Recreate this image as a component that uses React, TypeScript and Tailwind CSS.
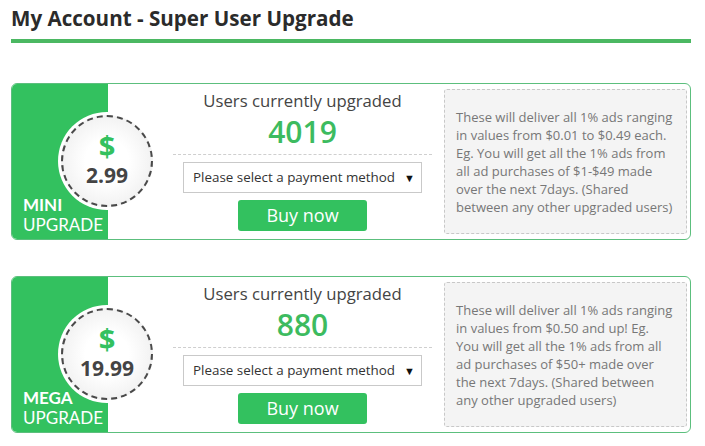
import { ReactNode } from "react";

type Plan = {
  name: string;
  price: string;
  users: string;
  text: ReactNode;
};

const plans: Plan[] = [
  {
    name: "MINI",
    price: "2.99",
    users: "4019",
    text: "These will deliver all 1% ads ranging in values from $0.01 to $0.49 each. Eg. You will get all the 1% ads from all ad purchases of $1-$49 made over the next 7days. (Shared between any other upgraded users)",
  },
  {
    name: "MEGA",
    price: "19.99",
    users: "880",
    text: "These will deliver all 1% ads ranging in values from $0.50 and up! Eg. You will get all the 1% ads from all ad purchases of $50+ made over the next 7days. (Shared between any other upgraded users)",
  },
];

function PriceBadge({ price }: { price: string }) {
  return (
    <div className="absolute left-[46px] top-[28px] flex h-[98px] w-[98px] items-center justify-center rounded-full bg-white">
      <div className="flex h-[92px] w-[92px] flex-col items-center justify-center rounded-full border-2 border-dashed border-[#4a4a4a] bg-[radial-gradient(circle,#ffffff_35%,#e9e9e9_100%)] pb-[2px]">
        <span className="text-[29px] font-bold leading-[30px] text-[#33c15f]">$</span>
        <span className="text-[21px] font-bold leading-[28px] text-[#444]">{price}</span>
      </div>
    </div>
  );
}

function PlanCard({ plan }: { plan: Plan }) {
  return (
    <div className="relative flex h-[157px] w-[680px] rounded-[6px] border border-[#5cbf7d]">
      {/* green side panel */}
      <div className="flex w-[96px] flex-col justify-end rounded-l-[5px] bg-[#33c15f] pb-[4px] pl-[11px] font-['Lato',sans-serif] text-[17px] leading-[20px] text-white">
        <span className="font-bold">{plan.name}</span>
        <span>UPGRADE</span>
      </div>

      <PriceBadge price={plan.price} />

      {/* middle column */}
      <div className="ml-[65px] flex w-[259px] flex-col items-center pt-[5px]">
        <div className="text-[16.7px] leading-[23px] text-[#444]">Users currently upgraded</div>
        <div className="mt-[2px] text-[30px] font-semibold leading-[36px] text-[#3dbb5f]">{plan.users}</div>
        <div className="mt-[4px] w-full border-t border-dashed border-[#cfcfcf]" />
        <div className="mt-[7px] flex h-[31px] w-[239px] items-center justify-between border border-[#c9c9c9] bg-white pl-[9px] pr-[6px] text-[13.4px] text-[#333]">
          <span>Please select a payment method</span>
          <span className="text-[11px] leading-none text-[#111]">▼</span>
        </div>
        <button className="mt-[7px] h-[31px] w-[129px] rounded-[3px] bg-[#33c15f] text-[18px] leading-[31px] text-white">
          Buy now
        </button>
      </div>

      {/* description */}
      <div className="my-[5px] ml-[12px] flex w-[243px] items-center rounded-[3px] border border-dashed border-[#c8c8c8] bg-[#f4f4f4] px-[11px] text-[13px] leading-[18px] text-[#777]">
        <p>{plan.text}</p>
      </div>
    </div>
  );
}

export default function App() {
  return (
    <div className="min-h-[446px] w-[705px] bg-white pl-[11px] pt-[4px] font-['Open_Sans',sans-serif]">
      <h1 className="w-[680px] border-b-4 border-[#4bb862] pb-[6px] text-[20.6px] font-bold leading-[29px] text-[#2b2b2b]">
        My Account - Super User Upgrade
      </h1>
      <div className="mt-[40px] flex flex-col gap-[36px]">
        {plans.map((p) => (
          <PlanCard key={p.name} plan={p} />
        ))}
      </div>
    </div>
  );
}
